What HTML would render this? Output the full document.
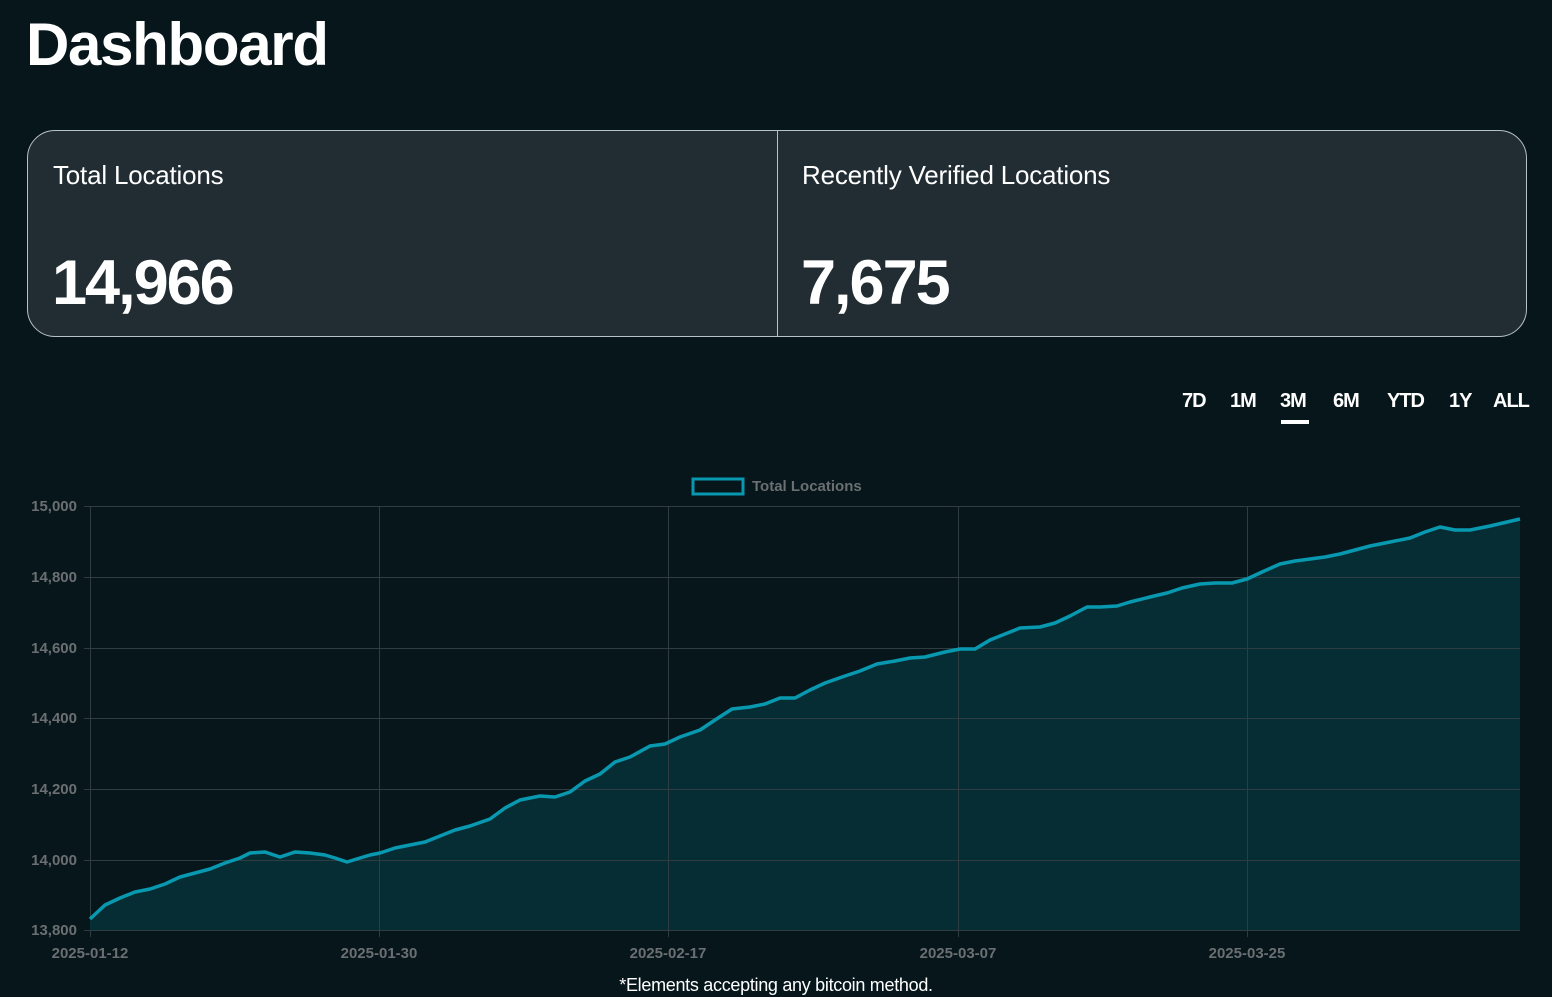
<!DOCTYPE html>
<html><head><meta charset="utf-8"><style>
html,body{margin:0;padding:0;background:#06161b;width:1552px;height:997px;overflow:hidden;font-family:"Liberation Sans",sans-serif;color:#fff;}
h1{position:absolute;left:26px;top:10px;margin:0;font-size:60px;font-weight:bold;letter-spacing:-1.3px;}
.card{position:absolute;left:27px;top:130px;width:1498px;height:205px;border:1px solid #b8c2c6;border-radius:28px;background:#212d33;overflow:hidden;}
.div{position:absolute;left:749px;top:0;width:1px;height:100%;background:#b8c2c6;}
.lab{position:absolute;top:29px;font-size:26px;letter-spacing:-0.2px;}
.num{position:absolute;top:116px;font-size:63px;font-weight:bold;letter-spacing:-2px;}
.tabs{position:absolute;top:390px;font-size:20px;font-weight:bold;letter-spacing:-1px;}
.tabs span{position:absolute;}
.ul{position:absolute;left:1281px;top:420px;width:28px;height:4px;background:#fff;}
.foot{position:absolute;left:0;width:1552px;text-align:center;top:975px;font-size:18px;letter-spacing:-0.3px;}
</style></head><body>
<h1>Dashboard</h1>
<div class="card"><div class="div"></div>
<div class="lab" style="left:25px">Total Locations</div>
<div class="num" style="left:24px">14,966</div>
<div class="lab" style="left:774px">Recently Verified Locations</div>
<div class="num" style="left:773px">7,675</div>
</div>
<div class="tabs"><span style="left:1182px">7D</span><span style="left:1230px">1M</span><span style="left:1280px">3M</span><span style="left:1333px">6M</span><span style="left:1387px">YTD</span><span style="left:1449px">1Y</span><span style="left:1493px">ALL</span></div>
<div class="ul"></div>
<svg style="position:absolute;left:0;top:0" width="1552" height="997">
<rect x="693" y="479" width="50" height="15" fill="none" stroke="#0898b0" stroke-width="3"/>
<text x="752" y="491" fill="#6b6f72" font-size="15" font-weight="bold" font-family="Liberation Sans">Total Locations</text>
<g stroke="#2f3d42" stroke-width="1">
<line x1="84" y1="506.5" x2="1520" y2="506.5"/><line x1="84" y1="577.5" x2="1520" y2="577.5"/><line x1="84" y1="648.5" x2="1520" y2="648.5"/><line x1="84" y1="718.5" x2="1520" y2="718.5"/><line x1="84" y1="789.5" x2="1520" y2="789.5"/><line x1="84" y1="860.5" x2="1520" y2="860.5"/><line x1="84" y1="930.5" x2="1520" y2="930.5"/>
<line x1="90.5" y1="506" x2="90.5" y2="937"/><line x1="379.5" y1="506" x2="379.5" y2="937"/><line x1="668.5" y1="506" x2="668.5" y2="937"/><line x1="958.5" y1="506" x2="958.5" y2="937"/><line x1="1247.5" y1="506" x2="1247.5" y2="937"/>
</g>
<polygon fill="#062e36" fill-opacity="0.95" points="90,930 90,919 105,905 120,898 135,892 150,889 165,884 180,877 195,873 210,869 225,863 240,858 250,853 265,852 280,857 295,852 310,853 325,855 335,858 347,862 360,858 370,855 380,853 395,848 410,845 425,842 440,836 455,830 470,826 490,819 505,808 520,800 540,796 555,797 570,792 585,781 600,774 615,762 630,757 650,746 665,744 680,737 700,730 715,720 732,709 750,707 765,704 780,698 795,698 810,690 825,683 845,676 860,671 877,664 895,661 910,658 925,657 945,652 960,649 975,649 990,640 1005,634 1020,628 1040,627 1055,623 1070,616 1087,607 1100,607 1117,606 1130,602 1150,597 1167,593 1182,588 1200,584 1215,583 1232,583 1247,579 1262,572 1280,564 1295,561 1310,559 1325,557 1340,554 1355,550 1370,546 1390,542 1410,538 1425,532 1440,527 1455,530 1470,530 1490,526 1520,519 1520,930"/>
<g stroke="#2f3d42" stroke-width="1"><line x1="90" y1="577.5" x2="1520" y2="577.5"/><line x1="90" y1="648.5" x2="1520" y2="648.5"/><line x1="90" y1="718.5" x2="1520" y2="718.5"/><line x1="90" y1="789.5" x2="1520" y2="789.5"/><line x1="90" y1="860.5" x2="1520" y2="860.5"/><line x1="379.5" y1="506" x2="379.5" y2="930"/><line x1="668.5" y1="506" x2="668.5" y2="930"/><line x1="958.5" y1="506" x2="958.5" y2="930"/><line x1="1247.5" y1="506" x2="1247.5" y2="930"/></g>
<polyline fill="none" stroke="#0899b0" stroke-width="3.5" stroke-linejoin="round" points="90,919 105,905 120,898 135,892 150,889 165,884 180,877 195,873 210,869 225,863 240,858 250,853 265,852 280,857 295,852 310,853 325,855 335,858 347,862 360,858 370,855 380,853 395,848 410,845 425,842 440,836 455,830 470,826 490,819 505,808 520,800 540,796 555,797 570,792 585,781 600,774 615,762 630,757 650,746 665,744 680,737 700,730 715,720 732,709 750,707 765,704 780,698 795,698 810,690 825,683 845,676 860,671 877,664 895,661 910,658 925,657 945,652 960,649 975,649 990,640 1005,634 1020,628 1040,627 1055,623 1070,616 1087,607 1100,607 1117,606 1130,602 1150,597 1167,593 1182,588 1200,584 1215,583 1232,583 1247,579 1262,572 1280,564 1295,561 1310,559 1325,557 1340,554 1355,550 1370,546 1390,542 1410,538 1425,532 1440,527 1455,530 1470,530 1490,526 1520,519"/>
<g fill="#6b6f72" font-size="15" font-weight="bold" font-family="Liberation Sans" text-anchor="end">
<text x="77" y="511">15,000</text><text x="77" y="582">14,800</text><text x="77" y="653">14,600</text><text x="77" y="723">14,400</text><text x="77" y="794">14,200</text><text x="77" y="865">14,000</text><text x="77" y="935">13,800</text>
</g>
<g fill="#6b6f72" font-size="15" font-weight="bold" font-family="Liberation Sans" text-anchor="middle">
<text x="90" y="958">2025-01-12</text><text x="379" y="958">2025-01-30</text><text x="668" y="958">2025-02-17</text><text x="958" y="958">2025-03-07</text><text x="1247" y="958">2025-03-25</text>
</g>
</svg>
<div class="foot">*Elements accepting any bitcoin method.</div>
</body></html>
